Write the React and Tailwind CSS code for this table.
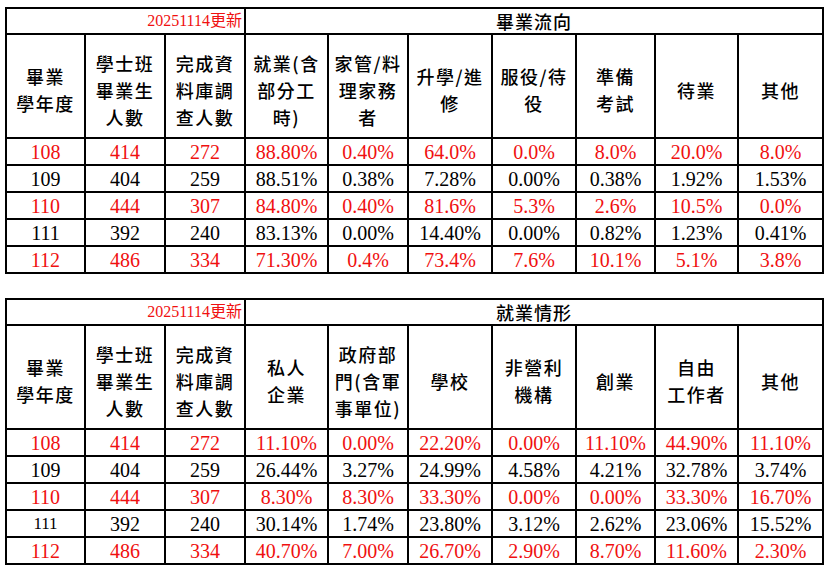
import React from "react";

const cols = [79, 80, 80, 83, 80, 84, 84, 79, 83, 85];
const colClass = [
  "w-[79px]",
  "w-[80px]",
  "w-[80px]",
  "w-[83px]",
  "w-[80px]",
  "w-[84px]",
  "w-[84px]",
  "w-[79px]",
  "w-[83px]",
  "w-[85px]",
];

const flowHeaders = [
  ["畢業", "學年度"],
  ["學士班", "畢業生", "人數"],
  ["完成資", "料庫調", "查人數"],
  ["就業(含", "部分工", "時)"],
  ["家管/料", "理家務", "者"],
  ["升學/進", "修"],
  ["服役/待", "役"],
  ["準備", "考試"],
  ["待業"],
  ["其他"],
];

const flowRows = [
  ["108", "414", "272", "88.80%", "0.40%", "64.0%", "0.0%", "8.0%", "20.0%", "8.0%"],
  ["109", "404", "259", "88.51%", "0.38%", "7.28%", "0.00%", "0.38%", "1.92%", "1.53%"],
  ["110", "444", "307", "84.80%", "0.40%", "81.6%", "5.3%", "2.6%", "10.5%", "0.0%"],
  ["111", "392", "240", "83.13%", "0.00%", "14.40%", "0.00%", "0.82%", "1.23%", "0.41%"],
  ["112", "486", "334", "71.30%", "0.4%", "73.4%", "7.6%", "10.1%", "5.1%", "3.8%"],
];

const jobHeaders = [
  ["畢業", "學年度"],
  ["學士班", "畢業生", "人數"],
  ["完成資", "料庫調", "查人數"],
  ["私人", "企業"],
  ["政府部", "門(含軍", "事單位)"],
  ["學校"],
  ["非營利", "機構"],
  ["創業"],
  ["自由", "工作者"],
  ["其他"],
];

const jobRows = [
  ["108", "414", "272", "11.10%", "0.00%", "22.20%", "0.00%", "11.10%", "44.90%", "11.10%"],
  ["109", "404", "259", "26.44%", "3.27%", "24.99%", "4.58%", "4.21%", "32.78%", "3.74%"],
  ["110", "444", "307", "8.30%", "8.30%", "33.30%", "0.00%", "0.00%", "33.30%", "16.70%"],
  ["111", "392", "240", "30.14%", "1.74%", "23.80%", "3.12%", "2.62%", "23.06%", "15.52%"],
  ["112", "486", "334", "40.70%", "7.00%", "26.70%", "2.90%", "8.70%", "11.60%", "2.30%"],
];

function StatTable({ title, headers, rows, smallFirst }) {
  return (
    <table className="border-collapse table-fixed w-[817px]">
      <colgroup>
        {cols.map((w, i) => (
          <col key={i} className={colClass[i]} />
        ))}
      </colgroup>
      <tbody>
        <tr className="h-[26px]">
          <td
            colSpan={3}
            className="border-2 border-black text-right pr-[2px] p-0 align-middle text-[#f01010] text-[16px] font-['Liberation_Serif','Noto_Sans_CJK_TC',serif] leading-none"
          >
            20251114更新
          </td>
          <td
            colSpan={7}
            className="border-2 border-black text-center p-0 align-middle text-[18px] font-medium leading-none font-['Noto_Sans_CJK_TC',sans-serif] tracking-[1px]"
          >
            {title}
          </td>
        </tr>
        <tr className="h-[104px]">
          {headers.map((lines, i) => (
            <td
              key={i}
              className="border-2 border-black text-center align-middle p-0 pt-2 text-[18px] leading-[27px] tracking-[1.5px] font-medium font-['Noto_Sans_CJK_TC',sans-serif]"
            >
              {lines.map((l, j) => (
                <div key={j}>{l}</div>
              ))}
            </td>
          ))}
        </tr>
        {rows.map((row, r) => (
          <tr key={r} className="h-[27px]">
            {row.map((v, c) => (
              <td
                key={c}
                className={
                  "border-2 border-black text-center align-middle p-0 leading-none font-['Liberation_Serif',serif] " +
                  (r % 2 === 0 ? "text-[#f01010] " : "text-black ") +
                  (smallFirst && r === 3 && c === 0 ? "text-[17px]" : "text-[20px]")
                }
              >
                {v}
              </td>
            ))}
          </tr>
        ))}
      </tbody>
    </table>
  );
}

export default function App() {
  return (
    <div className="w-[831px] h-[573px] bg-white pl-[5px] pt-[7px] flex flex-col gap-[24px]">
      <StatTable title="畢業流向" headers={flowHeaders} rows={flowRows} />
      <StatTable title="就業情形" headers={jobHeaders} rows={jobRows} smallFirst />
    </div>
  );
}
